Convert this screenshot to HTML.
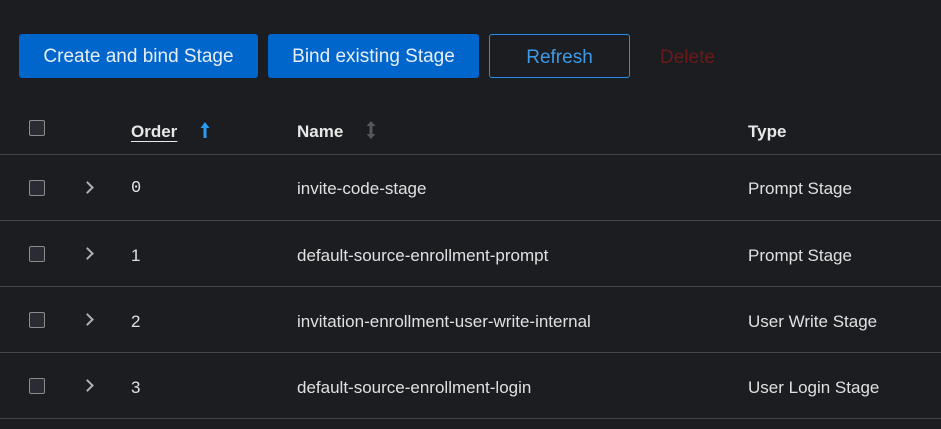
<!DOCTYPE html><html><head><style>
body{margin:0;width:941px;height:429px;background:#1b1d21;font-family:"Liberation Sans",sans-serif;color:#e0e0e0;position:relative;overflow:hidden}
.b{position:absolute;top:34px;height:44px;border-radius:3px;font-size:19px;line-height:46px;text-align:center;box-sizing:border-box}
.p{background:#0066cc;color:#e8eef8}
.t{position:absolute;font-size:17px;white-space:nowrap}
.cb{position:absolute;left:29px;width:16px;height:16px;border:1px solid #8a8d90;border-radius:2px;background:#2a2b33;box-sizing:border-box}
.ln{position:absolute;left:0;width:941px;height:1px;background:#44464a}
.ch{position:absolute;left:83px;width:7px;height:7px;border-right:2.5px solid #b0b0b0;border-top:2.5px solid #b0b0b0;transform:rotate(45deg)}
.h{font-weight:bold;color:#e8e8e8}
</style></head><body>
<div class="b p" style="left:19px;width:239px">Create and bind Stage</div>
<div class="b p" style="left:268px;width:211px">Bind existing Stage</div>
<div class="b" style="left:489px;width:141px;border:1px solid #2b8ce8;color:#3d9ae8">Refresh</div>
<div class="t" style="left:660px;top:47px;font-size:19px;color:#6b1a1a">Delete</div>
<div class="cb" style="top:120px"></div>
<div class="t h" style="left:131px;top:122px;text-decoration:underline;text-underline-offset:4px">Order</div>
<svg style="position:absolute;left:199px;top:121px" width="12" height="18" viewBox="0 0 12 18"><path d="M6 1 L1.5 7 H4.5 V17 H7.5 V7 H10.5 Z" fill="#2b9af3"/></svg>
<div class="t h" style="left:297px;top:122px">Name</div>
<svg style="position:absolute;left:365px;top:120px" width="12" height="20" viewBox="0 0 12 20"><path d="M6 1 L1.5 6 H4.5 V14 H1.5 L6 19 L10.5 14 H7.5 V6 H10.5 Z" fill="#55575b"/></svg>
<div class="t h" style="left:748px;top:122px">Type</div>
<div class="ln" style="top:154px"></div>
<div class="cb" style="top:180px"></div><div class="ch" style="top:183px"></div>
<div class="t" style="left:131px;top:179px;font-family:'Liberation Mono',monospace">0</div>
<div class="t" style="left:297px;top:179px">invite-code-stage</div>
<div class="t" style="left:748px;top:179px">Prompt Stage</div>
<div class="ln" style="top:220px"></div>
<div class="cb" style="top:246px"></div><div class="ch" style="top:249px"></div>
<div class="t" style="left:131px;top:246px">1</div>
<div class="t" style="left:297px;top:246px">default-source-enrollment-prompt</div>
<div class="t" style="left:748px;top:246px">Prompt Stage</div>
<div class="ln" style="top:286px"></div>
<div class="cb" style="top:312px"></div><div class="ch" style="top:315px"></div>
<div class="t" style="left:131px;top:312px">2</div>
<div class="t" style="left:297px;top:312px">invitation-enrollment-user-write-internal</div>
<div class="t" style="left:748px;top:312px">User Write Stage</div>
<div class="ln" style="top:352px"></div>
<div class="cb" style="top:378px"></div><div class="ch" style="top:381px"></div>
<div class="t" style="left:131px;top:378px">3</div>
<div class="t" style="left:297px;top:378px">default-source-enrollment-login</div>
<div class="t" style="left:748px;top:378px">User Login Stage</div>
<div class="ln" style="top:418px"></div>
</body></html>
